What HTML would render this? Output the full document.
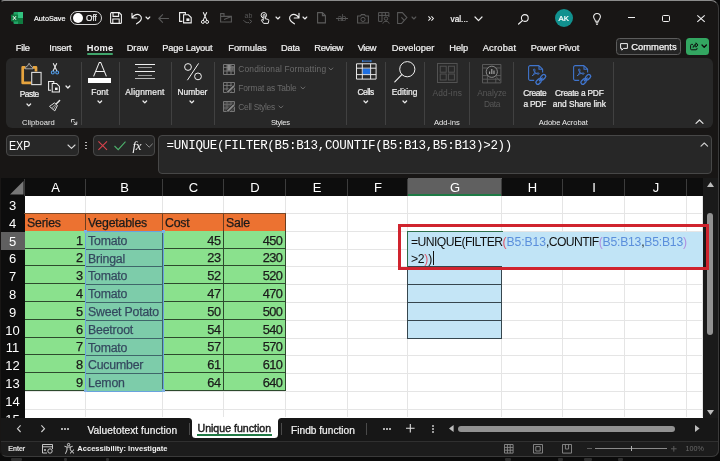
<!DOCTYPE html>
<html><head><meta charset="utf-8"><title>Excel</title>
<style>
*{box-sizing:border-box;margin:0;padding:0}
html,body{width:720px;height:461px;overflow:hidden;background:#0b0b0b;font-family:"Liberation Sans",sans-serif;}
#win{position:absolute;left:0;top:0;width:719px;height:457px;background:#181615;border-radius:4px 8px 7px 7px;overflow:hidden}
#winb{position:absolute;left:0;top:0;width:719px;height:457px;border:1px solid #3a3a3a;border-left-color:#181615;border-top-color:#8c8c8c;border-radius:4px 8px 7px 7px;pointer-events:none}
.abs{position:absolute}
.t{position:absolute;white-space:nowrap;line-height:12px;color:#fff}
#win,#grid{will-change:transform}
svg{position:absolute;overflow:visible}
.tab{position:absolute;top:41px;font-size:11.6px;color:#f2f2f2;white-space:nowrap;line-height:13px;letter-spacing:-0.25px}
#ribbon{position:absolute;left:6px;top:57.8px;width:707px;height:70.6px;background:#282828;border-radius:6px}
.sep{position:absolute;top:62px;width:1px;height:62px;background:#404040}
.rl{position:absolute;font-size:10.8px;color:#f0f0f0;white-space:nowrap;line-height:12px;text-align:center;letter-spacing:-0.25px;transform:translateX(-50%)}
.gl{position:absolute;top:116px;font-size:9.6px;color:#e4e4e4;white-space:nowrap;line-height:12px;letter-spacing:-0.2px;transform:translateX(-50%)}
.dim{color:#6f6f6f}
.fbox{position:absolute;background:#272727;border:1px solid #474747;border-radius:4px}
#grid{position:absolute;left:0;top:178px;width:703px;height:240px;background:#fff;overflow:hidden}
.ch{position:absolute;top:0;height:18px;background:#0d0d0d;color:#fff;font-size:13px;line-height:20px;text-align:center}
.rh{position:absolute;left:0;width:25px;background:#0d0d0d;color:#fff;font-size:13px;text-align:center}
.vl{position:absolute;top:18px;width:1px;height:221px;background:#e5e5e5}
.hl{position:absolute;left:25px;height:1px;width:678px;background:#e5e5e5}
.c{position:absolute;font-size:12.3px;color:#1b1b1b;white-space:nowrap;overflow:hidden;letter-spacing:-0.3px;-webkit-text-stroke:0.25px #1b1b1b;border-right:1px solid #2d4a2d;border-bottom:1px solid #2d4a2d}
.or{background:#ec7231;border-right-color:#6b3d1f !important;border-bottom-color:#3a4a2a !important}
.gr{background:#8ae18d}
.num{text-align:right;padding-right:2.5px;font-size:12.8px;letter-spacing:-0.5px;margin-top:-0.7px}
.txt{padding-left:2px;letter-spacing:-0.18px}
</style></head><body>
<div id="win">
<svg style="left:11px;top:12px" width="12" height="12" viewBox="0 0 12 12"><rect x="2.5" y="0" width="9.5" height="12" rx="1" fill="#21a366"/><rect x="7" y="0" width="5" height="6" fill="#33c481"/><rect x="7" y="6" width="5" height="6" fill="#107c41"/><rect x="0" y="2.5" width="7" height="7" rx="0.8" fill="#0f7a40"/><path d="M2 4.2L5 7.8M5 4.2L2 7.8" stroke="#fff" stroke-width="1"/></svg>
<div class="t" style="left:34.0px;top:12.6px;font-size:7.26px;letter-spacing:0px;color:#f4f4f4;-webkit-text-stroke:0.22px #f4f4f4;">AutoSave</div>
<div class="abs" style="left:70px;top:10.8px;width:31.7px;height:14.6px;border:1px solid #d8d8d8;border-radius:8px"></div>
<div class="abs" style="left:73.2px;top:13.4px;width:9.4px;height:9.4px;border-radius:5px;background:#fff"></div>
<div class="t" style="left:86.0px;top:12.6px;font-size:8.25px;letter-spacing:0px;color:#f4f4f4;-webkit-text-stroke:0.22px #f4f4f4;">Off</div>
<svg style="left:110px;top:12px" width="12" height="12" viewBox="0 0 12 12"><path d="M1 .6H9.2L11.4 2.8V10.4A1 1 0 0 1 10.4 11.4H1.6A1 1 0 0 1 .6 10.4V1.6A1 1 0 0 1 1.6 .6Z M3 .6V4.4H8.6V.6 M2.8 11.4V7H9.2V11.4" fill="none" stroke="#f0f0f0" stroke-width="1.1"/></svg>
<svg style="left:130.5px;top:12px" width="12" height="12" viewBox="0 0 12 12"><path d="M1 1.2V6H5.8 M1.2 5.8C3 2.6 6.6 1.4 9 3.4C11.4 5.4 10.6 8.2 7.8 10.2L5.6 11.8" fill="none" stroke="#f0f0f0" stroke-width="1.15" stroke-linecap="round" stroke-linejoin="round"/></svg>
<svg style="left:146.4px;top:17.2px" width="3.8" height="2"><path d="M0 0L1.9 2L3.8 0" fill="none" stroke="#ececec" stroke-width="1.15" stroke-linecap="round" stroke-linejoin="round"/></svg>
<svg style="left:158.3px;top:13.5px" width="11" height="9" viewBox="0 0 11 9"><path d="M10.6 4.5H.8M4.6 .7L.8 4.5L4.6 8.3" fill="none" stroke="#585858" stroke-width="1.1" stroke-linecap="round" stroke-linejoin="round"/></svg>
<svg style="left:178.8px;top:12px" width="13" height="11.5" viewBox="0 0 13 11.5"><path d="M3.4 9.4H.6V.6H6.4V2.6" fill="none" stroke="#f0f0f0" stroke-width="1.1"/><path d="M4.6 2.8H9.4L12.2 5.6V10.9H4.6Z" fill="none" stroke="#f0f0f0" stroke-width="1.1"/><rect x="7.4" y="6.4" width="3" height="2.6" fill="#f0f0f0"/></svg>
<svg style="left:201px;top:12px" width="8" height="12" viewBox="0 0 8 12"><path d="M2.2 .3L5.9 8.4M5.8 .3L2.1 8.4" stroke="#f0f0f0" stroke-width="1.05" fill="none"/><circle cx="1.9" cy="9.9" r="1.5" fill="none" stroke="#f0f0f0" stroke-width="1"/><circle cx="6.1" cy="9.9" r="1.5" fill="none" stroke="#f0f0f0" stroke-width="1"/></svg>
<svg style="left:220px;top:13px" width="12" height="9.5" viewBox="0 0 12 9.5"><path d="M.6 3.4H11.4V9H.6Z M.6 3.4V.6H4V3.4 M4 6.6L11.4 3.4" fill="none" stroke="#585858" stroke-width="1.1"/></svg>
<div class="t" style="left:244.5px;top:10.1px;font-size:7px;letter-spacing:0.214px;color:#585858;">ab</div>
<svg style="left:243px;top:18.5px" width="9.5" height="5" viewBox="0 0 9.5 5"><path d="M.5 1.2C2 3.4 4 4 6 3.4M6.4 .6L8.8 2.4L6.6 4.4" fill="none" stroke="#585858" stroke-width="1"/></svg>
<svg style="left:260px;top:12px" width="9.5" height="12" viewBox="0 0 9.5 12"><circle cx="3.8" cy="3.2" r="2.7" fill="none" stroke="#f0f0f0" stroke-width="1"/><path d="M3.2 8.6V3.4A.9.9 0 0 1 5 3.4V6.6L8 7.4A1 1 0 0 1 8.8 8.6L8.2 11.4H3.6L1.4 8.4A.8.8 0 0 1 2.6 7.6Z" fill="#181818" stroke="#f0f0f0" stroke-width="1" stroke-linejoin="round"/></svg>
<svg style="left:275.6px;top:17.2px" width="3.8" height="2"><path d="M0 0L1.9 2L3.8 0" fill="none" stroke="#ececec" stroke-width="1.15" stroke-linecap="round" stroke-linejoin="round"/></svg>
<svg style="left:288px;top:12px" width="12" height="12" viewBox="0 0 12 12"><path d="M11 1.2V6H6.2 M10.8 5.8C9 2.6 5.4 1.4 3 3.4C.6 5.4 1.4 8.2 4.2 10.2L6.4 11.8" fill="none" stroke="#f0f0f0" stroke-width="1.15" stroke-linecap="round" stroke-linejoin="round"/></svg>
<svg style="left:303.4px;top:17.2px" width="3.8" height="2"><path d="M0 0L1.9 2L3.8 0" fill="none" stroke="#ececec" stroke-width="1.15" stroke-linecap="round" stroke-linejoin="round"/></svg>
<svg style="left:317px;top:12.3px" width="9" height="11.5" viewBox="0 0 9 11.5"><path d="M.6 .6H5.4L8.4 3.6V10.9H.6Z M5.4 .6V3.6H8.4" fill="none" stroke="#5c5c5c" stroke-width="1.1"/></svg>
<div class="t" style="left:337.6px;top:12.0px;font-size:8.6px;letter-spacing:-0.766px;color:#585858;">ab</div>
<div class="abs" style="left:336px;top:18.2px;width:11.5px;height:1px;background:#585858"></div>
<svg style="left:357px;top:13.5px" width="12" height="9.5" viewBox="0 0 12 9.5"><path d="M.6 2H3.4L4.4 .6H7.6L8.6 2H11.4V9H.6Z" fill="none" stroke="#585858" stroke-width="1.1"/><circle cx="6" cy="5.4" r="2.1" fill="none" stroke="#585858" stroke-width="1"/></svg>
<svg style="left:377.5px;top:12px" width="11.5" height="12" viewBox="0 0 11.5 12"><path d="M.6 .6H10.9V5 M.6 .6V9.4H4 M.6 3.4H10.9 M4 .6V9.4 M7.4 .6V4" fill="none" stroke="#585858" stroke-width="1"/><circle cx="8" cy="6.6" r="1.7" fill="none" stroke="#585858" stroke-width="1"/><path d="M4.8 11.6C5.2 8.6 10.8 8.6 11.2 11.6" fill="none" stroke="#585858" stroke-width="1"/></svg>
<svg style="left:397px;top:12px" width="10.5" height="12" viewBox="0 0 10.5 12"><path d="M.6 .6H5.4L9.9 5.6L4.6 11.4H.6Z M4.4 5.4L7 8.2" fill="none" stroke="#585858" stroke-width="1.05"/></svg>
<svg style="left:412.1px;top:17.0px" width="3.8" height="2"><path d="M0 0L1.9 2L3.8 0" fill="none" stroke="#585858" stroke-width="1.1" stroke-linecap="round" stroke-linejoin="round"/></svg>
<svg style="left:427.5px;top:16.4px" width="6" height="5" viewBox="0 0 6 5"><path d="M.4 .4L2.4 2.5L.4 4.6M3.4 .4L5.4 2.5L3.4 4.6" fill="none" stroke="#f0f0f0" stroke-width="1.05"/></svg>
<div class="t" style="left:450.5px;top:13.0px;font-size:8.29px;letter-spacing:0px;color:#f4f4f4;-webkit-text-stroke:0.22px #f4f4f4;">val...</div>
<svg style="left:475.3px;top:16.8px" width="7" height="3.6"><path d="M0 0L3.5 3.6L7 0" fill="none" stroke="#ececec" stroke-width="1.2" stroke-linecap="round" stroke-linejoin="round"/></svg>
<svg style="left:517.5px;top:13.5px" width="11" height="10.5" viewBox="0 0 11 10.5"><circle cx="6.8" cy="4" r="3.4" fill="none" stroke="#f0f0f0" stroke-width="1.1"/><path d="M4.4 6.6L.6 10" stroke="#f0f0f0" stroke-width="1.2" stroke-linecap="round"/></svg>
<div class="abs" style="left:554.5px;top:8.8px;width:18.6px;height:18.6px;border-radius:10px;background:#11918f"></div>
<div class="t" style="left:558.6px;top:12.6px;font-size:7.8px;letter-spacing:0px;color:#fff;-webkit-text-stroke:0.22px #fff;">AK</div>
<svg style="left:593px;top:13px" width="8" height="11.6" viewBox="0 0 8 11.6"><path d="M2.4 8.2C2.4 6.6.6 5.8.6 3.8A3.4 3.4 0 0 1 7.4 3.8C7.4 5.8 5.6 6.6 5.6 8.2Z M2.6 9.8H5.4 M3 11.2H5" fill="none" stroke="#f0f0f0" stroke-width="1.05" stroke-linejoin="round"/></svg>
<div class="abs" style="left:627.5px;top:17px;width:7.6px;height:1.1px;background:#f0f0f0"></div>
<div class="abs" style="left:662px;top:14.6px;width:7.8px;height:7.2px;border:1.1px solid #f0f0f0;border-radius:1.6px"></div>
<svg style="left:696.7px;top:14.6px" width="8" height="7.2" viewBox="0 0 8 7.2"><path d="M.3 .3L7.7 6.9M7.7 .3L.3 6.9" stroke="#f0f0f0" stroke-width="1.1"/></svg>
<div class="t" style="left:15.7px;top:41.5px;font-size:9.3px;letter-spacing:-0.228px;color:#f2f2f2;-webkit-text-stroke:0.22px #f2f2f2;">File</div>
<div class="t" style="left:49.3px;top:41.5px;font-size:9.3px;letter-spacing:-0.172px;color:#f2f2f2;-webkit-text-stroke:0.22px #f2f2f2;">Insert</div>
<div class="t" style="left:86.7px;top:41.5px;font-size:9.3px;letter-spacing:0.254px;color:#f2f2f2;font-weight:bold;">Home</div>
<div class="t" style="left:126.7px;top:41.5px;font-size:9.3px;letter-spacing:-0.034px;color:#f2f2f2;-webkit-text-stroke:0.22px #f2f2f2;">Draw</div>
<div class="t" style="left:162.3px;top:41.5px;font-size:9.3px;letter-spacing:-0.183px;color:#f2f2f2;-webkit-text-stroke:0.22px #f2f2f2;">Page Layout</div>
<div class="t" style="left:228.3px;top:41.5px;font-size:9.3px;letter-spacing:-0.051px;color:#f2f2f2;-webkit-text-stroke:0.22px #f2f2f2;">Formulas</div>
<div class="t" style="left:281.0px;top:41.5px;font-size:9.3px;letter-spacing:-0.215px;color:#f2f2f2;-webkit-text-stroke:0.22px #f2f2f2;">Data</div>
<div class="t" style="left:314.3px;top:41.5px;font-size:9.3px;letter-spacing:-0.299px;color:#f2f2f2;-webkit-text-stroke:0.22px #f2f2f2;">Review</div>
<div class="t" style="left:357.7px;top:41.5px;font-size:9.3px;letter-spacing:-0.386px;color:#f2f2f2;-webkit-text-stroke:0.22px #f2f2f2;">View</div>
<div class="t" style="left:391.7px;top:41.5px;font-size:9.3px;letter-spacing:0.026px;color:#f2f2f2;-webkit-text-stroke:0.22px #f2f2f2;">Developer</div>
<div class="t" style="left:449.3px;top:41.5px;font-size:9.3px;letter-spacing:-0.042px;color:#f2f2f2;-webkit-text-stroke:0.22px #f2f2f2;">Help</div>
<div class="t" style="left:482.7px;top:41.5px;font-size:9.3px;letter-spacing:0.208px;color:#f2f2f2;-webkit-text-stroke:0.22px #f2f2f2;">Acrobat</div>
<div class="t" style="left:530.7px;top:41.5px;font-size:9.3px;letter-spacing:-0.102px;color:#f2f2f2;-webkit-text-stroke:0.22px #f2f2f2;">Power Pivot</div>
<div class="abs" style="left:86.7px;top:53.4px;width:26.6px;height:1.6px;background:#3fa56b;border-radius:1px"></div>
<div class="abs" style="left:616.3px;top:37.5px;width:64.5px;height:17.4px;border:1px solid #5c5c5c;border-radius:3.5px;background:#242424"></div>
<svg style="left:620px;top:42.5px" width="8" height="8" viewBox="0 0 8 8"><path d="M.6 .6H7.4V5.4H3.6L1.8 7.2V5.4H.6Z" fill="none" stroke="#f0f0f0" stroke-width="1" stroke-linejoin="round"/></svg>
<div class="t" style="left:631.3px;top:40.7px;font-size:9.39px;letter-spacing:0px;color:#f6f6f6;-webkit-text-stroke:0.25px #f6f6f6;">Comments</div>
<div class="abs" style="left:686.3px;top:38px;width:22.8px;height:16.8px;border-radius:3.5px;background:#33a661"></div>
<svg style="left:690px;top:41.6px" width="8.4" height="8.4" viewBox="0 0 8.4 8.4"><path d="M3 2.4H1.6A1 1 0 0 0 .6 3.4V6.8A1 1 0 0 0 1.6 7.8H6A1 1 0 0 0 7 6.8V6 M3.2 5.4C3.2 3.6 4.2 2.6 6 2.6V.8L8 3L6 5.2V3.8C4.8 3.8 3.8 4.2 3.2 5.4Z" fill="none" stroke="#0c0c0c" stroke-width=".95" stroke-linejoin="round"/></svg>
<svg style="left:701.5px;top:44.9px" width="4.4" height="2.2"><path d="M0 0L2.2 2.2L4.4 0" fill="none" stroke="#0c0c0c" stroke-width="1.3" stroke-linecap="round" stroke-linejoin="round"/></svg>
<div id="ribbon"></div>
<div class="abs" style="left:80.7px;top:61.5px;width:1px;height:63px;background:#414141"></div>
<div class="abs" style="left:118.7px;top:61.5px;width:1px;height:63px;background:#414141"></div>
<div class="abs" style="left:170.7px;top:61.5px;width:1px;height:63px;background:#414141"></div>
<div class="abs" style="left:214.0px;top:61.5px;width:1px;height:63px;background:#414141"></div>
<div class="abs" style="left:346.1px;top:61.5px;width:1px;height:63px;background:#414141"></div>
<div class="abs" style="left:385.0px;top:61.5px;width:1px;height:63px;background:#414141"></div>
<div class="abs" style="left:424.3px;top:61.5px;width:1px;height:63px;background:#414141"></div>
<div class="abs" style="left:469.1px;top:61.5px;width:1px;height:63px;background:#414141"></div>
<div class="abs" style="left:512.9px;top:61.5px;width:1px;height:63px;background:#414141"></div>
<div class="abs" style="left:612.9px;top:61.5px;width:1px;height:63px;background:#414141"></div>
<svg style="left:20.5px;top:62px" width="21" height="23.5" viewBox="0 0 21 23.5"><path d="M10 20.9H1.7V5.4H4.4 M12 5.4H15V9.6" fill="none" stroke="#e6a43e" stroke-width="2.7" stroke-linejoin="round"/><path d="M4.2 6.8L5.2 4.4H6.2L8.1 1.3L10 4.4H11L12 6.8Z" fill="#333" stroke="#b4b4b4" stroke-width=".9" stroke-linejoin="round"/><rect x="10.7" y="10.4" width="9.4" height="12.2" fill="#2a2a2a" stroke="#dedede" stroke-width="1.1"/></svg>
<div class="t" style="left:19.7px;top:88.0px;font-size:8.4px;letter-spacing:-0.495px;color:#f0f0f0;-webkit-text-stroke:0.22px #f0f0f0;">Paste</div>
<svg style="left:27.4px;top:103.5px" width="3.6" height="1.9"><path d="M0 0L1.8 1.9L3.6 0" fill="none" stroke="#ececec" stroke-width="1.3" stroke-linecap="round" stroke-linejoin="round"/></svg>
<svg style="left:50.6px;top:63.4px" width="8" height="11.4" viewBox="0 0 8 11.4"><path d="M2.2 .3L5.9 8M5.8 .3L2.1 8" stroke="#f0f0f0" stroke-width="1.05" fill="none"/><circle cx="1.8" cy="9.5" r="1.45" fill="none" stroke="#4f9be8" stroke-width="1.1"/><circle cx="6.2" cy="9.5" r="1.45" fill="none" stroke="#4f9be8" stroke-width="1.1"/></svg>
<svg style="left:48.3px;top:81px" width="12" height="11.6" viewBox="0 0 12 11.6"><path d="M3 9.2H.6V.6H5.8V2.4" fill="none" stroke="#f0f0f0" stroke-width="1.05"/><path d="M4.2 2.6H8.6L11.4 5.4V11H4.2Z" fill="none" stroke="#f0f0f0" stroke-width="1.05"/><rect x="7" y="6.6" width="2.6" height="2.4" fill="#f0f0f0"/></svg>
<svg style="left:65.6px;top:86.4px" width="3.8" height="2"><path d="M0 0L1.9 2L3.8 0" fill="none" stroke="#ececec" stroke-width="1.3" stroke-linecap="round" stroke-linejoin="round"/></svg>
<svg style="left:49px;top:100px" width="11.5" height="11.5" viewBox="0 0 11.5 11.5"><path d="M10.6 .5L7.4 3.7" stroke="#e6e6e6" stroke-width="1.5" stroke-linecap="round"/><path d="M5.6 2.8L8.4 5.6L5.8 10.9L.5 6.4Z" fill="none" stroke="#dcdcdc" stroke-width="1" stroke-linejoin="round"/><path d="M6.4 4.4L2.6 8.2M7.2 5.2L4.2 9.6" stroke="#bdbdbd" stroke-width=".8"/></svg>
<div class="t" style="left:22.0px;top:116.7px;font-size:7.6px;letter-spacing:0.021px;color:#ececec;">Clipboard</div>
<svg style="left:71.3px;top:119.2px" width="6.4" height="5.8" viewBox="0 0 6.4 5.8"><path d="M.5 3.4V.5H3.6 M2.4 2.2L5.6 5.2 M5.8 2.6V5.4H2.8" fill="none" stroke="#e0e0e0" stroke-width=".9"/></svg>
<svg style="left:93px;top:62.2px" width="14" height="14.8" viewBox="0 0 14 14.8"><path d="M.6 14.4L6.2 .6H7.8L13.4 14.4 M2.8 9.6H11.2" fill="none" stroke="#f0f0f0" stroke-width="1.05" stroke-linejoin="round"/></svg>
<div class="abs" style="left:87.8px;top:77.7px;width:23.5px;height:5.8px;background:#fff"></div>
<div class="t" style="left:91.3px;top:85.8px;font-size:8.4px;letter-spacing:0.064px;color:#f0f0f0;-webkit-text-stroke:0.22px #f0f0f0;">Font</div>
<svg style="left:97.5px;top:101.0px" width="3.6" height="1.9"><path d="M0 0L1.8 1.9L3.6 0" fill="none" stroke="#ececec" stroke-width="1.3" stroke-linecap="round" stroke-linejoin="round"/></svg>
<div class="abs" style="left:134.7px;top:63.5px;width:20.3px;height:1px;background:#f0f0f0"></div>
<div class="abs" style="left:137.5px;top:67.2px;width:14.5px;height:1px;background:#9a9a9a"></div>
<div class="abs" style="left:134.7px;top:70.8px;width:20.3px;height:1px;background:#f0f0f0"></div>
<div class="abs" style="left:137.5px;top:74.7px;width:14.5px;height:1px;background:#9a9a9a"></div>
<div class="abs" style="left:134.7px;top:77.8px;width:20.3px;height:1.4px;background:#b8b8b8"></div>
<div class="t" style="left:125.3px;top:85.8px;font-size:8.4px;letter-spacing:0.231px;color:#f0f0f0;-webkit-text-stroke:0.22px #f0f0f0;">Alignment</div>
<svg style="left:142.8px;top:101.0px" width="3.6" height="1.9"><path d="M0 0L1.8 1.9L3.6 0" fill="none" stroke="#ececec" stroke-width="1.3" stroke-linecap="round" stroke-linejoin="round"/></svg>
<svg style="left:183.7px;top:63.4px" width="18" height="17.6" viewBox="0 0 18 17.6"><circle cx="4" cy="4" r="3.4" fill="none" stroke="#f0f0f0" stroke-width="1"/><circle cx="14" cy="13.4" r="3.4" fill="none" stroke="#f0f0f0" stroke-width="1"/><path d="M14.6 .4L3.4 17.2" stroke="#f0f0f0" stroke-width="1"/></svg>
<div class="t" style="left:177.5px;top:85.8px;font-size:8.4px;letter-spacing:0.025px;color:#f0f0f0;-webkit-text-stroke:0.22px #f0f0f0;">Number</div>
<svg style="left:190.4px;top:101.0px" width="3.6" height="1.9"><path d="M0 0L1.8 1.9L3.6 0" fill="none" stroke="#ececec" stroke-width="1.3" stroke-linecap="round" stroke-linejoin="round"/></svg>
<svg style="left:223.2px;top:63.5px" width="12" height="11" viewBox="0 0 12 11"><path d="M.5 .5H11.5V10.5H.5Z M.5 3.4H11.5 M.5 7H11.5 M4 .5V10.5 M8 .5V10.5" fill="none" stroke="#7a7a7a" stroke-width=".95"/><rect x="4.4" y="1" width="3.2" height="5.6" fill="#8a8a8a"/><rect x="8.2" y="2" width="2.6" height="4.6" fill="#6a6a6a"/></svg>
<svg style="left:223.2px;top:82px" width="12" height="11" viewBox="0 0 12 11"><path d="M.5 .5H11.5V10.5H.5Z M.5 3.4H11.5 M.5 7H11.5 M4 .5V10.5 M8 .5V10.5" fill="none" stroke="#7a7a7a" stroke-width=".95"/><path d="M4 10.8L11.2 3.6" stroke="#292929" stroke-width="3.4"/><path d="M4.4 10.4L11 3.8" stroke="#8a8a8a" stroke-width="1.8"/></svg>
<svg style="left:223.2px;top:101px" width="12" height="11" viewBox="0 0 12 11"><path d="M.5 .5H11.5V10.5H.5Z M.5 3.4H11.5 M.5 7H11.5 M4 .5V10.5 M8 .5V10.5" fill="none" stroke="#7a7a7a" stroke-width=".95"/><rect x="1.2" y="1.2" width="9.6" height="8.6" fill="#5a5a5a" opacity=".6"/><path d="M4 10.8L11.2 3.6" stroke="#292929" stroke-width="3.4"/><path d="M4.4 10.4L11 3.8" stroke="#8a8a8a" stroke-width="1.8"/></svg>
<div class="t" style="left:238.3px;top:63.4px;font-size:8.4px;letter-spacing:0.166px;color:#6b6b6b;">Conditional Formatting</div>
<svg style="left:329.4px;top:68.2px" width="3.8" height="2"><path d="M0 0L1.9 2L3.8 0" fill="none" stroke="#6b6b6b" stroke-width="1" stroke-linecap="round" stroke-linejoin="round"/></svg>
<div class="t" style="left:238.3px;top:82.0px;font-size:8.4px;letter-spacing:-0.104px;color:#6b6b6b;">Format as Table</div>
<svg style="left:301.1px;top:86.8px" width="3.8" height="2"><path d="M0 0L1.9 2L3.8 0" fill="none" stroke="#6b6b6b" stroke-width="1" stroke-linecap="round" stroke-linejoin="round"/></svg>
<div class="t" style="left:238.3px;top:101.0px;font-size:8.4px;letter-spacing:-0.268px;color:#6b6b6b;">Cell Styles</div>
<svg style="left:278.6px;top:105.8px" width="3.8" height="2"><path d="M0 0L1.9 2L3.8 0" fill="none" stroke="#6b6b6b" stroke-width="1" stroke-linecap="round" stroke-linejoin="round"/></svg>
<div class="t" style="left:271.0px;top:116.9px;font-size:7.6px;letter-spacing:-0.339px;color:#ececec;">Styles</div>
<svg style="left:355.7px;top:60.4px" width="20.6" height="19.6" viewBox="0 0 20.6 19.6"><path d="M6.6 0V2.2M6.6 1.1H15M15 0V2.2" fill="none" stroke="#3b83e0" stroke-width="1"/><path d="M.5 3.8H20.1V19.1H.5Z M.5 8.2H20.1 M.5 14.6H20.1 M6.3 3.8V19.1 M14.6 3.8V19.1" fill="none" stroke="#e8e8e8" stroke-width="1"/><rect x="6.8" y="8.7" width="7.3" height="5.4" fill="#1f6fe0"/></svg>
<div class="t" style="left:357.6px;top:86.0px;font-size:8.4px;letter-spacing:-0.518px;color:#f0f0f0;-webkit-text-stroke:0.22px #f0f0f0;">Cells</div>
<svg style="left:364.0px;top:101.0px" width="3.6" height="1.9"><path d="M0 0L1.8 1.9L3.6 0" fill="none" stroke="#ececec" stroke-width="1.3" stroke-linecap="round" stroke-linejoin="round"/></svg>
<svg style="left:394px;top:61.4px" width="22" height="22" viewBox="0 0 22 22"><circle cx="13.3" cy="8.2" r="7.6" fill="none" stroke="#f0f0f0" stroke-width="1"/><path d="M7.8 13.6L.8 20.8" stroke="#f0f0f0" stroke-width="1.1" stroke-linecap="round"/></svg>
<div class="t" style="left:391.7px;top:86.0px;font-size:8.4px;letter-spacing:0.003px;color:#f0f0f0;-webkit-text-stroke:0.22px #f0f0f0;">Editing</div>
<svg style="left:402.9px;top:101.0px" width="3.6" height="1.9"><path d="M0 0L1.8 1.9L3.6 0" fill="none" stroke="#ececec" stroke-width="1.3" stroke-linecap="round" stroke-linejoin="round"/></svg>
<svg style="left:436.8px;top:63.4px" width="20.6" height="20" viewBox="0 0 20.6 20"><rect x=".5" y=".5" width="19.6" height="19" fill="none" stroke="#525252" stroke-width="1"/><rect x="3.2" y="3.2" width="6" height="6" fill="none" stroke="#525252" stroke-width="1"/><rect x="11.4" y="3.2" width="6" height="6" fill="none" stroke="#525252" stroke-width="1"/><rect x="3.2" y="11" width="6" height="6" fill="none" stroke="#525252" stroke-width="1"/><rect x="11.4" y="11" width="6" height="6" fill="none" stroke="#525252" stroke-width="1"/></svg>
<div class="t" style="left:432.5px;top:87.1px;font-size:8.4px;letter-spacing:0.17px;color:#575757;">Add-ins</div>
<div class="t" style="left:434.0px;top:116.9px;font-size:7.6px;letter-spacing:0.005px;color:#ececec;">Add-ins</div>
<svg style="left:482.3px;top:63.8px" width="19.4" height="19.4" viewBox="0 0 19.4 19.4"><path d="M.5 .5H18.9V18.9H.5Z M.5 4H18.9 M.5 11.6H18.9 M.5 15.2H18.9 M5.4 11.6V18.9 M13.8 14V18.9" fill="none" stroke="#5a5a5a" stroke-width="1"/><circle cx="9.8" cy="7.8" r="5.6" fill="#292929" stroke="#8a8a8a" stroke-width="1"/><path d="M7.6 10V7.4 M9.8 10V5 M12 10V6.6" stroke="#a0a0a0" stroke-width="1.2"/><path d="M13.6 12L18 17.2" stroke="#5a5a5a" stroke-width="1"/></svg>
<div class="t" style="left:477.2px;top:87.1px;font-size:8.4px;letter-spacing:-0.047px;color:#575757;">Analyze</div>
<div class="t" style="left:483.9px;top:98.2px;font-size:8.4px;letter-spacing:-0.381px;color:#575757;">Data</div>
<svg style="left:528.3px;top:65.3px" width="18" height="20" viewBox="0 0 18 20"><path d="M11 .6H2.2A1.6 1.6 0 0 0 .6 2.2V13.8A1.6 1.6 0 0 0 2.2 15.4H6.2 M11 .6L14.6 4.2V7.4 M11 .6V4.2H14.6" fill="none" stroke="#3f74cc" stroke-width="1.1" stroke-linejoin="round"/><path d="M4.2 11C6.4 9 7.4 5.8 6.8 4.4C6.4 3.4 5.4 3.6 5.6 5C6 7.2 8.8 9.4 10.6 9.2C11.6 9 11.4 8 10.2 8C8.2 8 5.2 9.4 4.2 11Z" fill="none" stroke="#3f74cc" stroke-width=".95"/><g fill="none" stroke="#3f74cc" stroke-width="1.35"><rect x="-3" y="-1.9" width="6" height="3.8" rx="1.9" transform="translate(10.6 16.6) rotate(-45)"/><rect x="-3" y="-1.9" width="6" height="3.8" rx="1.9" transform="translate(15 12.2) rotate(-45)"/><path d="M11.4 15.8L14.2 13" stroke-linecap="round"/></g></svg>
<svg style="left:572.8px;top:65.3px" width="18" height="20" viewBox="0 0 18 20"><path d="M11 .6H2.2A1.6 1.6 0 0 0 .6 2.2V13.8A1.6 1.6 0 0 0 2.2 15.4H6.2 M11 .6L14.6 4.2V7.4 M11 .6V4.2H14.6" fill="none" stroke="#3f74cc" stroke-width="1.1" stroke-linejoin="round"/><path d="M4.2 11C6.4 9 7.4 5.8 6.8 4.4C6.4 3.4 5.4 3.6 5.6 5C6 7.2 8.8 9.4 10.6 9.2C11.6 9 11.4 8 10.2 8C8.2 8 5.2 9.4 4.2 11Z" fill="none" stroke="#3f74cc" stroke-width=".95"/><g fill="none" stroke="#3f74cc" stroke-width="1.35"><rect x="-3" y="-1.9" width="6" height="3.8" rx="1.9" transform="translate(10.6 16.6) rotate(-45)"/><rect x="-3" y="-1.9" width="6" height="3.8" rx="1.9" transform="translate(15 12.2) rotate(-45)"/><path d="M11.4 15.8L14.2 13" stroke-linecap="round"/></g></svg>
<div class="t" style="left:523.2px;top:87.1px;font-size:8.4px;letter-spacing:-0.322px;color:#f0f0f0;-webkit-text-stroke:0.22px #f0f0f0;">Create</div>
<div class="t" style="left:523.4px;top:98.2px;font-size:8.4px;letter-spacing:-0.201px;color:#f0f0f0;-webkit-text-stroke:0.22px #f0f0f0;">a PDF</div>
<div class="t" style="left:555.0px;top:87.1px;font-size:8.4px;letter-spacing:-0.223px;color:#f0f0f0;-webkit-text-stroke:0.22px #f0f0f0;">Create a PDF</div>
<div class="t" style="left:552.8px;top:98.2px;font-size:8.4px;letter-spacing:-0.039px;color:#f0f0f0;-webkit-text-stroke:0.22px #f0f0f0;">and Share link</div>
<div class="t" style="left:538.8px;top:116.7px;font-size:7.6px;letter-spacing:-0.065px;color:#ececec;">Adobe Acrobat</div>
<svg style="left:695.8px;top:120.3px" width="7" height="3.4"><path d="M0 3.4L3.5 0L7 3.4" fill="none" stroke="#e0e0e0" stroke-width="1.2" stroke-linecap="round" stroke-linejoin="round"/></svg>
<div class="fbox" style="left:5.5px;top:135px;width:73.2px;height:20.6px"></div>
<div class="t" style="left:9.4px;top:140.2px;font-size:12px;line-height:12px;color:#fff;transform:scaleX(.89);transform-origin:0 50%">EXP</div>
<svg style="left:67.5px;top:144.5px" width="7" height="3.4"><path d="M0 0L3.5 3.4L7 0" fill="none" stroke="#d8d8d8" stroke-width="1.1" stroke-linecap="round" stroke-linejoin="round"/></svg>
<div class="abs" style="left:85.3px;top:141.7px;width:1.8px;height:1.8px;border-radius:1px;background:#d0d0d0"></div>
<div class="abs" style="left:85.3px;top:144.7px;width:1.8px;height:1.8px;border-radius:1px;background:#d0d0d0"></div>
<div class="abs" style="left:85.3px;top:147.7px;width:1.8px;height:1.8px;border-radius:1px;background:#d0d0d0"></div>
<div class="fbox" style="left:93.2px;top:135px;width:62px;height:20.6px"></div>
<svg style="left:98px;top:140.6px" width="9.4" height="9.2" viewBox="0 0 9.4 9.2"><path d="M.4 .4L9 8.8M9 .4L.4 8.8" stroke="#d8434d" stroke-width="1.1"/></svg>
<svg style="left:113.8px;top:140.6px" width="12" height="9.2" viewBox="0 0 12 9.2"><path d="M.5 5L4.2 8.6L11.5 .6" fill="none" stroke="#4db16c" stroke-width="1.1"/></svg>
<div class="t" style="left:132.5px;top:138.6px;font-family:'Liberation Serif',serif;font-style:italic;font-size:13px;line-height:14px;color:#f4f4f4;letter-spacing:-.3px">fx</div>
<svg style="left:146.3px;top:144.2px" width="6.4" height="3.2"><path d="M0 0L3.2 3.2L6.4 0" fill="none" stroke="#8c8c8c" stroke-width="1" stroke-linecap="round" stroke-linejoin="round"/></svg>
<div class="fbox" style="left:157.5px;top:134.8px;width:554.4px;height:38.8px"></div>
<div id="ftxt" class="t" style="left:166.6px;top:139.6px;font-family:'Liberation Mono',monospace;font-size:12.5px;letter-spacing:-0.305px;line-height:13px;color:#fff">=UNIQUE(FILTER(B5:B13,COUNTIF(B5:B13,B5:B13)>2))</div>
<svg style="left:700.7px;top:143.4px" width="6.6" height="3.2"><path d="M0 3.2L3.3 0L6.6 3.2" fill="none" stroke="#cfcfcf" stroke-width="1.1" stroke-linecap="round" stroke-linejoin="round"/></svg>
<div id="grid">
<div class="ch" style="left:0;width:25px"></div>
<svg style="left:9.5px;top:2.5px" width="13.5" height="13.5"><path d="M13.5 0V13.5H0Z" fill="#777"/></svg>
<div class="ch" style="left:25px;width:61px">A</div>
<div class="ch" style="left:86px;width:77px">B</div>
<div class="ch" style="left:163px;width:61px">C</div>
<div class="ch" style="left:224px;width:62px">D</div>
<div class="ch" style="left:286px;width:62px">E</div>
<div class="ch" style="left:348px;width:60px">F</div>
<div class="ch" style="left:408px;width:94px;background:#606060;border-bottom:2px solid #1e7a45">G</div>
<div class="ch" style="left:502px;width:61px">H</div>
<div class="ch" style="left:563px;width:62px">I</div>
<div class="ch" style="left:625px;width:62px">J</div>
<div class="ch" style="left:687px;width:16px"></div>
<div class="abs" style="left:24px;top:1px;width:1px;height:17px;background:#3c3c3c"></div>
<div class="abs" style="left:85px;top:1px;width:1px;height:17px;background:#3c3c3c"></div>
<div class="abs" style="left:162px;top:1px;width:1px;height:17px;background:#3c3c3c"></div>
<div class="abs" style="left:223px;top:1px;width:1px;height:17px;background:#3c3c3c"></div>
<div class="abs" style="left:285px;top:1px;width:1px;height:17px;background:#3c3c3c"></div>
<div class="abs" style="left:347px;top:1px;width:1px;height:17px;background:#3c3c3c"></div>
<div class="abs" style="left:407px;top:1px;width:1px;height:17px;background:#3c3c3c"></div>
<div class="abs" style="left:501px;top:1px;width:1px;height:17px;background:#3c3c3c"></div>
<div class="abs" style="left:562px;top:1px;width:1px;height:17px;background:#3c3c3c"></div>
<div class="abs" style="left:624px;top:1px;width:1px;height:17px;background:#3c3c3c"></div>
<div class="abs" style="left:686px;top:1px;width:1px;height:17px;background:#3c3c3c"></div>
<div class="rh" style="top:18px;height:18px;line-height:19.5px">3</div>
<div class="rh" style="top:36px;height:18px;line-height:19.5px">4</div>
<div class="rh" style="top:54px;height:18px;line-height:19.5px;background:#606060">5</div>
<div class="rh" style="top:72px;height:17px;line-height:18.5px">6</div>
<div class="rh" style="top:89px;height:18px;line-height:19.5px">7</div>
<div class="rh" style="top:107px;height:18px;line-height:19.5px">8</div>
<div class="rh" style="top:125px;height:18px;line-height:19.5px">9</div>
<div class="rh" style="top:143px;height:18px;line-height:19.5px">10</div>
<div class="rh" style="top:161px;height:17px;line-height:18.5px">11</div>
<div class="rh" style="top:178px;height:18px;line-height:19.5px">12</div>
<div class="rh" style="top:196px;height:18px;line-height:19.5px">13</div>
<div class="rh" style="top:214px;height:18px;line-height:19.5px">14</div>
<div class="rh" style="top:232px;height:18px;line-height:19.5px">15</div>
<div class="vl" style="left:85px"></div>
<div class="vl" style="left:162px"></div>
<div class="vl" style="left:223px"></div>
<div class="vl" style="left:285px"></div>
<div class="vl" style="left:347px"></div>
<div class="vl" style="left:407px"></div>
<div class="vl" style="left:501px"></div>
<div class="vl" style="left:562px"></div>
<div class="vl" style="left:624px"></div>
<div class="vl" style="left:686px"></div>
<div class="vl" style="left:702px"></div>
<div class="hl" style="top:35px"></div>
<div class="hl" style="top:53px"></div>
<div class="hl" style="top:71px"></div>
<div class="hl" style="top:88px"></div>
<div class="hl" style="top:106px"></div>
<div class="hl" style="top:124px"></div>
<div class="hl" style="top:142px"></div>
<div class="hl" style="top:160px"></div>
<div class="hl" style="top:177px"></div>
<div class="hl" style="top:195px"></div>
<div class="hl" style="top:213px"></div>
<div class="hl" style="top:231px"></div>
<div class="hl" style="top:249px"></div>
<div class="c or txt" style="left:25px;top:36px;width:61px;height:18px;line-height:19px">Series</div>
<div class="c or txt" style="left:86px;top:36px;width:77px;height:18px;line-height:19px">Vegetables</div>
<div class="c or txt" style="left:163px;top:36px;width:61px;height:18px;line-height:19px">Cost</div>
<div class="c or txt" style="left:224px;top:36px;width:62px;height:18px;line-height:19px">Sale</div>
<div class="c gr num" style="left:25px;top:54px;width:61px;height:18px;line-height:19px">1</div>
<div class="c gr txt" style="left:86px;top:54px;width:77px;height:18px;line-height:19px">Tomato</div>
<div class="c gr num" style="left:163px;top:54px;width:61px;height:18px;line-height:19px">45</div>
<div class="c gr num" style="left:224px;top:54px;width:62px;height:18px;line-height:19px">450</div>
<div class="c gr num" style="left:25px;top:72px;width:61px;height:17px;line-height:18px">2</div>
<div class="c gr txt" style="left:86px;top:72px;width:77px;height:17px;line-height:18px">Bringal</div>
<div class="c gr num" style="left:163px;top:72px;width:61px;height:17px;line-height:18px">23</div>
<div class="c gr num" style="left:224px;top:72px;width:62px;height:17px;line-height:18px">230</div>
<div class="c gr num" style="left:25px;top:89px;width:61px;height:18px;line-height:19px">3</div>
<div class="c gr txt" style="left:86px;top:89px;width:77px;height:18px;line-height:19px">Tomato</div>
<div class="c gr num" style="left:163px;top:89px;width:61px;height:18px;line-height:19px">52</div>
<div class="c gr num" style="left:224px;top:89px;width:62px;height:18px;line-height:19px">520</div>
<div class="c gr num" style="left:25px;top:107px;width:61px;height:18px;line-height:19px">4</div>
<div class="c gr txt" style="left:86px;top:107px;width:77px;height:18px;line-height:19px">Tomato</div>
<div class="c gr num" style="left:163px;top:107px;width:61px;height:18px;line-height:19px">47</div>
<div class="c gr num" style="left:224px;top:107px;width:62px;height:18px;line-height:19px">470</div>
<div class="c gr num" style="left:25px;top:125px;width:61px;height:18px;line-height:19px">5</div>
<div class="c gr txt" style="left:86px;top:125px;width:77px;height:18px;line-height:19px">Sweet Potato</div>
<div class="c gr num" style="left:163px;top:125px;width:61px;height:18px;line-height:19px">50</div>
<div class="c gr num" style="left:224px;top:125px;width:62px;height:18px;line-height:19px">500</div>
<div class="c gr num" style="left:25px;top:143px;width:61px;height:18px;line-height:19px">6</div>
<div class="c gr txt" style="left:86px;top:143px;width:77px;height:18px;line-height:19px">Beetroot</div>
<div class="c gr num" style="left:163px;top:143px;width:61px;height:18px;line-height:19px">54</div>
<div class="c gr num" style="left:224px;top:143px;width:62px;height:18px;line-height:19px">540</div>
<div class="c gr num" style="left:25px;top:161px;width:61px;height:17px;line-height:18px">7</div>
<div class="c gr txt" style="left:86px;top:161px;width:77px;height:17px;line-height:18px">Tomato</div>
<div class="c gr num" style="left:163px;top:161px;width:61px;height:17px;line-height:18px">57</div>
<div class="c gr num" style="left:224px;top:161px;width:62px;height:17px;line-height:18px">570</div>
<div class="c gr num" style="left:25px;top:178px;width:61px;height:18px;line-height:19px">8</div>
<div class="c gr txt" style="left:86px;top:178px;width:77px;height:18px;line-height:19px">Cucumber</div>
<div class="c gr num" style="left:163px;top:178px;width:61px;height:18px;line-height:19px">61</div>
<div class="c gr num" style="left:224px;top:178px;width:62px;height:18px;line-height:19px">610</div>
<div class="c gr num" style="left:25px;top:196px;width:61px;height:18px;line-height:19px">9</div>
<div class="c gr txt" style="left:86px;top:196px;width:77px;height:18px;line-height:19px">Lemon</div>
<div class="c gr num" style="left:163px;top:196px;width:61px;height:18px;line-height:19px">64</div>
<div class="c gr num" style="left:224px;top:196px;width:62px;height:18px;line-height:19px">640</div>
<div class="abs" style="left:24px;top:35px;width:262px;height:1px;background:#7a4a2a"></div>
<div class="abs" style="left:86px;top:54px;width:77px;height:160px;background:rgba(100,160,230,0.33)"></div>
<div class="abs" style="left:85px;top:53px;width:79px;height:161px;border:1px solid #69a3de"></div>
<div class="abs" style="left:84px;top:52px;width:3.4px;height:3.4px;background:#7fb0e2"></div>
<div class="abs" style="left:162px;top:52px;width:3.4px;height:3.4px;background:#7fb0e2"></div>
<div class="abs" style="left:84px;top:211px;width:3.4px;height:3.4px;background:#7fb0e2"></div>
<div class="abs" style="left:162px;top:211px;width:3.4px;height:3.4px;background:#7fb0e2"></div>
<div class="abs" style="left:408px;top:54px;width:295px;height:35px;background:#c1e4f6"></div>
<div class="abs" style="left:407px;top:88px;width:95px;height:19px;background:#c4e5f6;border:1px solid #36464e"></div>
<div class="abs" style="left:407px;top:106px;width:95px;height:19px;background:#c4e5f6;border:1px solid #36464e"></div>
<div class="abs" style="left:407px;top:124px;width:95px;height:19px;background:#c4e5f6;border:1px solid #36464e"></div>
<div class="abs" style="left:407px;top:142px;width:95px;height:19px;background:#c4e5f6;border:1px solid #36464e"></div>
<div class="abs" style="left:407px;top:53px;width:96px;height:36px;border-left:1px solid #2c6e4a;border-top:1px solid #2c6e4a"></div>
<div id="e1" class="t" style="left:411px;top:57.599999999999994px;font-size:13.2px;letter-spacing:-0.3px;transform:scaleX(.925);transform-origin:0 50%"><span style="color:#111;letter-spacing:-0.64px">=UNIQUE(FILTER</span><span style="color:#e0566b;letter-spacing:-0.1px">(</span><span style="color:#5b8fdc;letter-spacing:-0.1px">B5:B13</span><span style="color:#111;letter-spacing:-0.65px">,COUNTIF</span><span style="color:#b08ee0;letter-spacing:-0.25px">(</span><span style="color:#5b8fdc;letter-spacing:-0.25px">B5:B13</span><span style="color:#111;letter-spacing:-0.25px">,</span><span style="color:#5b8fdc;letter-spacing:-0.25px">B5:B13</span><span style="color:#b08ee0;letter-spacing:0px">)</span></div>
<div id="e2" class="t" style="left:411px;top:75.4px;font-size:13.2px;letter-spacing:-0.3px;transform:scaleX(.925);transform-origin:0 50%"><span style="color:#111">&gt;2</span><span style="color:#e0566b">)</span><span style="color:#111">)</span></div>
<div class="abs" style="left:432.6px;top:73px;width:1px;height:14px;background:#111"></div>
</div>
<div class="abs" style="left:703px;top:178px;width:16px;height:240px;background:#1a1a1a"></div>
<svg style="left:706.6px;top:181.6px" width="7" height="5"><path d="M0 5L3.5 0L7 5Z" fill="#bdbdbd"/></svg>
<svg style="left:706.6px;top:410px" width="7" height="5"><path d="M0 0L3.5 5L7 0Z" fill="#bdbdbd"/></svg>
<div class="abs" style="left:707.2px;top:213px;width:5.6px;height:122px;background:#929292;border-radius:3px"></div>
<div class="abs" style="left:398px;top:224.2px;width:311.3px;height:46px;border:3.2px solid #d0242e"></div>
<div class="abs" style="left:0;top:418px;width:719px;height:6px;background:#fff"></div><div class="abs" style="left:0;top:424px;width:719px;height:16.5px;background:#171717"></div><div class="abs" style="left:0;top:418px;width:192px;height:22.5px;background:#171717;border-top-right-radius:3.5px"></div><div class="abs" style="left:278px;top:418px;width:441px;height:22.5px;background:#171717;border-top-left-radius:3.5px"></div>
<svg style="left:16.6px;top:424.6px" width="4" height="7.4"><path d="M3.6 .4L.5 3.7L3.6 7" fill="none" stroke="#d0d0d0" stroke-width="1.1"/></svg>
<svg style="left:40.8px;top:424.6px" width="4" height="7.4"><path d="M.4 .4L3.5 3.7L.4 7" fill="none" stroke="#d0d0d0" stroke-width="1.1"/></svg>
<div class="abs" style="left:61.3px;top:427.6px;width:2px;height:2px;border-radius:1px;background:#e0e0e0"></div><div class="abs" style="left:64.2px;top:427.6px;width:2px;height:2px;border-radius:1px;background:#e0e0e0"></div><div class="abs" style="left:67.1px;top:427.6px;width:2px;height:2px;border-radius:1px;background:#e0e0e0"></div>
<div class="t" style="left:87.5px;top:424.5px;font-size:10.2px;letter-spacing:0.048px;color:#f0f0f0;-webkit-text-stroke:0.22px #f0f0f0;">Valuetotext function</div>
<div class="abs" style="left:188.5px;top:422.5px;width:1px;height:12px;background:#4a4a4a"></div>
<div class="abs" style="left:192px;top:417px;width:86px;height:21.4px;background:#fff;border-radius:0 0 3.5px 3.5px"></div>
<div class="t" style="left:197.5px;top:421.9px;font-size:10.58px;letter-spacing:0px;color:#1e1e1e;-webkit-text-stroke:0.45px #1e1e1e;">Unique function</div>
<div class="abs" style="left:197.3px;top:433.6px;width:74.6px;height:2.2px;background:#1f7a45"></div>
<div class="abs" style="left:280.5px;top:422.5px;width:1px;height:12px;background:#4a4a4a"></div>
<div class="t" style="left:291.0px;top:424.5px;font-size:10.2px;letter-spacing:-0.006px;color:#f0f0f0;-webkit-text-stroke:0.22px #f0f0f0;">Findb function</div>
<div class="abs" style="left:365.5px;top:422.5px;width:1px;height:12px;background:#4a4a4a"></div>
<div class="abs" style="left:383.1px;top:427.6px;width:2px;height:2px;border-radius:1px;background:#e0e0e0"></div><div class="abs" style="left:386.0px;top:427.6px;width:2px;height:2px;border-radius:1px;background:#e0e0e0"></div><div class="abs" style="left:388.9px;top:427.6px;width:2px;height:2px;border-radius:1px;background:#e0e0e0"></div>
<svg style="left:405.8px;top:424.2px" width="8.6" height="8.6"><path d="M4.3 0V8.6M0 4.3H8.6" stroke="#e0e0e0" stroke-width="1.1"/></svg>
<div class="abs" style="left:432.3px;top:425.4px;width:1.6px;height:1.6px;border-radius:1px;background:#c8c8c8"></div>
<div class="abs" style="left:432.3px;top:428.3px;width:1.6px;height:1.6px;border-radius:1px;background:#c8c8c8"></div>
<div class="abs" style="left:432.3px;top:431.2px;width:1.6px;height:1.6px;border-radius:1px;background:#c8c8c8"></div>
<svg style="left:449.0px;top:425.4px" width="4.6" height="7"><path d="M4.6 0L0 3.5L4.6 7Z" fill="#bdbdbd"/></svg>
<div class="abs" style="left:457.5px;top:425.8px;width:217px;height:6.2px;background:#929292;border-radius:3.2px"></div>
<svg style="left:694.6px;top:425.4px" width="4.6" height="7"><path d="M0 0L4.6 3.5L0 7Z" fill="#bdbdbd"/></svg>
<div class="abs" style="left:0;top:440.5px;width:719px;height:17px;background:#1c1c1c;border-top:1px solid #303030"></div>
<div class="t" style="left:8.3px;top:443.4px;font-size:7.07px;letter-spacing:0px;color:#e8e8e8;-webkit-text-stroke:0.22px #e8e8e8;">Enter</div>
<svg style="left:41.6px;top:444px" width="11" height="9.6"><path d="M.5 .5H10.5V5 M.5 .5V9H5 M.5 2.8H10.5" fill="none" stroke="#d8d8d8" stroke-width=".9"/><circle cx="8" cy="7" r="2.2" fill="none" stroke="#d8d8d8" stroke-width=".9"/><circle cx="3" cy="6" r=".9" fill="#d8d8d8"/></svg>
<svg style="left:64px;top:443.4px" width="11" height="11"><circle cx="4.6" cy="1.6" r="1.2" fill="none" stroke="#e0e0e0" stroke-width=".9"/><path d="M.8 3.4C3 4.4 6.2 4.4 8.4 3.4 M3 4.2V7L1.6 10.4 M6.2 4.2V6.4" fill="none" stroke="#e0e0e0" stroke-width=".9" stroke-linecap="round"/><path d="M6 6.6L10 10.4M10 6.6L6 10.4" stroke="#e0e0e0" stroke-width="1"/></svg>
<div class="t" style="left:77.3px;top:443.4px;font-size:7.55px;letter-spacing:0px;color:#f2f2f2;font-weight:bold;">Accessibility: Investigate</div>
<svg style="left:504.4px;top:443.6px" width="9.6" height="9.6"><path d="M.5 .5H9.1V9.1H.5Z M3.4 .5V9.1 M6.2 .5V9.1 M.5 3.4H9.1 M.5 6.2H9.1" fill="none" stroke="#8c8c8c" stroke-width=".9"/></svg>
<svg style="left:533.2px;top:443.6px" width="10" height="9.6"><path d="M.5 .5H9.5V9.1H.5Z M2.8 2.6H7.2V7H2.8Z" fill="none" stroke="#8c8c8c" stroke-width=".9"/></svg>
<svg style="left:562.4px;top:443.6px" width="10" height="9.6"><path d="M.5 .5H9.5V9.1H.5Z M3.4 .5V5H6.6V.5" fill="none" stroke="#8c8c8c" stroke-width=".9"/></svg>
<div class="abs" style="left:586.5px;top:448px;width:5px;height:1px;background:#5c5c5c"></div>
<div class="abs" style="left:595.4px;top:448px;width:71.6px;height:1px;background:#8a8a8a"></div>
<div class="abs" style="left:630.8px;top:445.6px;width:1.6px;height:5.6px;background:#b0b0b0"></div>
<svg style="left:670.6px;top:445.6px" width="5.6" height="5.6"><path d="M2.8 0V5.6M0 2.8H5.6" stroke="#5c5c5c" stroke-width="1"/></svg>
<div class="t" style="left:685.6px;top:443.4px;font-size:7.19px;letter-spacing:0px;color:#6a6a6a;">100%</div>
</div>
<div id="winb"></div>
<div class="abs" style="left:11px;top:458px;width:11px;height:3px;background:#2e2e2e;border-radius:1px"></div>
<div class="abs" style="left:64px;top:458px;width:3px;height:3px;background:#2e2e2e;border-radius:1px"></div>
<div class="abs" style="left:106px;top:458px;width:3px;height:3px;background:#2e2e2e;border-radius:1px"></div>
<div class="abs" style="left:505px;top:458px;width:6px;height:3px;background:#2e2e2e;border-radius:1px"></div>
<div class="abs" style="left:558px;top:458px;width:5px;height:3px;background:#2e2e2e;border-radius:1px"></div>
<div class="abs" style="left:584px;top:458px;width:8px;height:3px;background:#2e2e2e;border-radius:1px"></div>
<div class="abs" style="left:618px;top:458px;width:5px;height:3px;background:#2e2e2e;border-radius:1px"></div>
</body></html>
